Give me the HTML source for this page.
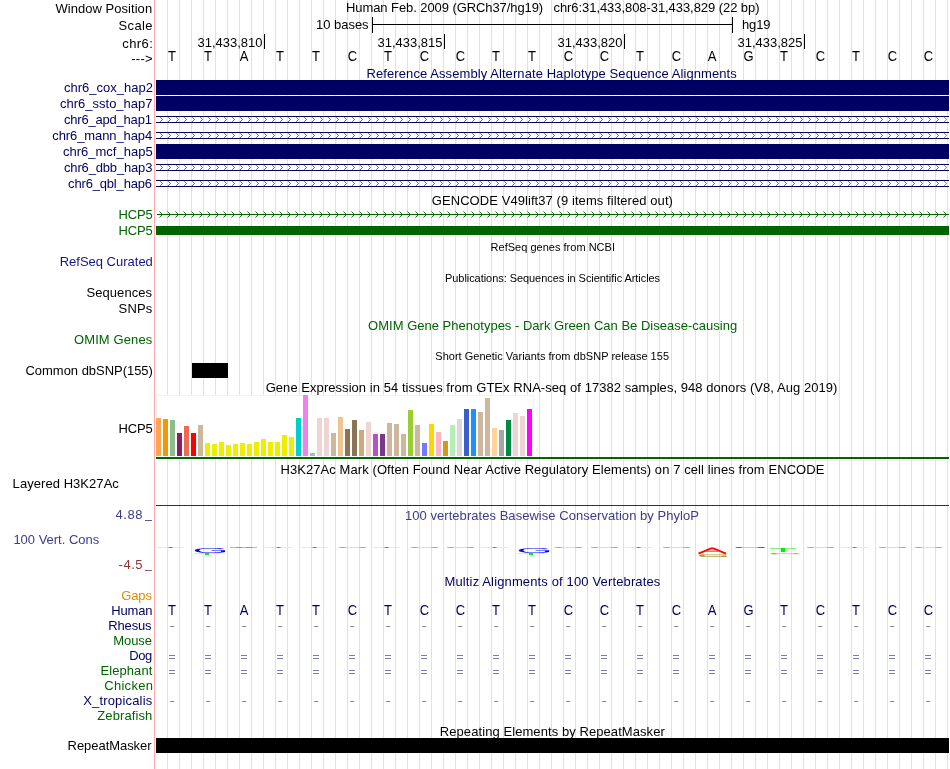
<!DOCTYPE html>
<html><head><meta charset="utf-8"><style>
html,body{margin:0;padding:0;background:#fff;width:950px;height:769px;overflow:hidden}
svg{display:block;will-change:transform}
text{font-family:"Liberation Sans",sans-serif}
</style></head><body>
<svg width="950" height="769" viewBox="0 0 950 769">
<defs>
<pattern id="chevN" x="160" y="0" width="8" height="16" patternUnits="userSpaceOnUse">
<rect x="0" y="5" width="1" height="1" fill="#000064" opacity="0.47"/>
<rect x="1" y="6" width="1" height="1" fill="#000064" opacity="0.47"/>
<rect x="2" y="7" width="1" height="1" fill="#000064" opacity="0.47"/>
<rect x="1" y="8" width="1" height="1" fill="#000064" opacity="0.47"/>
<rect x="0" y="9" width="1" height="1" fill="#000064" opacity="0.47"/>
</pattern>
<pattern id="chevG" x="159" y="211" width="8" height="7" patternUnits="userSpaceOnUse">
<rect x="0" y="0" width="1" height="1" fill="#006400" opacity="0.45"/>
<rect x="1" y="1" width="1" height="1" fill="#006400" opacity="0.9"/>
<rect x="2" y="2" width="1" height="3" fill="#006400" opacity="0.9"/>
<rect x="1" y="5" width="1" height="1" fill="#006400" opacity="0.9"/>
<rect x="0" y="6" width="1" height="1" fill="#006400" opacity="0.45"/>
</pattern>
</defs>
<rect x="0" y="0" width="950" height="769" fill="#fff"/>
<rect x="167" y="0" width="1" height="769" fill="#DDDDFF" />
<rect x="179" y="0" width="1" height="769" fill="#DDDDFF" />
<rect x="191" y="0" width="1" height="769" fill="#DDDDFF" />
<rect x="203" y="0" width="1" height="769" fill="#DDDDFF" />
<rect x="215" y="0" width="1" height="769" fill="#DDDDFF" />
<rect x="227" y="0" width="1" height="769" fill="#DDDDFF" />
<rect x="239" y="0" width="1" height="769" fill="#DDDDFF" />
<rect x="251" y="0" width="1" height="769" fill="#DDDDFF" />
<rect x="263" y="0" width="1" height="769" fill="#DDDDFF" />
<rect x="275" y="0" width="1" height="769" fill="#DDDDFF" />
<rect x="287" y="0" width="1" height="769" fill="#DDDDFF" />
<rect x="299" y="0" width="1" height="769" fill="#DDDDFF" />
<rect x="311" y="0" width="1" height="769" fill="#DDDDFF" />
<rect x="323" y="0" width="1" height="769" fill="#DDDDFF" />
<rect x="335" y="0" width="1" height="769" fill="#DDDDFF" />
<rect x="347" y="0" width="1" height="769" fill="#DDDDFF" />
<rect x="359" y="0" width="1" height="769" fill="#DDDDFF" />
<rect x="371" y="0" width="1" height="769" fill="#DDDDFF" />
<rect x="383" y="0" width="1" height="769" fill="#DDDDFF" />
<rect x="395" y="0" width="1" height="769" fill="#DDDDFF" />
<rect x="407" y="0" width="1" height="769" fill="#DDDDFF" />
<rect x="419" y="0" width="1" height="769" fill="#DDDDFF" />
<rect x="431" y="0" width="1" height="769" fill="#DDDDFF" />
<rect x="443" y="0" width="1" height="769" fill="#DDDDFF" />
<rect x="455" y="0" width="1" height="769" fill="#DDDDFF" />
<rect x="467" y="0" width="1" height="769" fill="#DDDDFF" />
<rect x="479" y="0" width="1" height="769" fill="#DDDDFF" />
<rect x="491" y="0" width="1" height="769" fill="#DDDDFF" />
<rect x="503" y="0" width="1" height="769" fill="#DDDDFF" />
<rect x="515" y="0" width="1" height="769" fill="#DDDDFF" />
<rect x="527" y="0" width="1" height="769" fill="#DDDDFF" />
<rect x="539" y="0" width="1" height="769" fill="#DDDDFF" />
<rect x="551" y="0" width="1" height="769" fill="#DDDDFF" />
<rect x="563" y="0" width="1" height="769" fill="#DDDDFF" />
<rect x="575" y="0" width="1" height="769" fill="#DDDDFF" />
<rect x="587" y="0" width="1" height="769" fill="#DDDDFF" />
<rect x="599" y="0" width="1" height="769" fill="#DDDDFF" />
<rect x="611" y="0" width="1" height="769" fill="#DDDDFF" />
<rect x="623" y="0" width="1" height="769" fill="#DDDDFF" />
<rect x="635" y="0" width="1" height="769" fill="#DDDDFF" />
<rect x="647" y="0" width="1" height="769" fill="#DDDDFF" />
<rect x="659" y="0" width="1" height="769" fill="#DDDDFF" />
<rect x="671" y="0" width="1" height="769" fill="#DDDDFF" />
<rect x="683" y="0" width="1" height="769" fill="#DDDDFF" />
<rect x="695" y="0" width="1" height="769" fill="#DDDDFF" />
<rect x="707" y="0" width="1" height="769" fill="#DDDDFF" />
<rect x="719" y="0" width="1" height="769" fill="#DDDDFF" />
<rect x="731" y="0" width="1" height="769" fill="#DDDDFF" />
<rect x="743" y="0" width="1" height="769" fill="#DDDDFF" />
<rect x="755" y="0" width="1" height="769" fill="#DDDDFF" />
<rect x="767" y="0" width="1" height="769" fill="#DDDDFF" />
<rect x="779" y="0" width="1" height="769" fill="#DDDDFF" />
<rect x="791" y="0" width="1" height="769" fill="#DDDDFF" />
<rect x="803" y="0" width="1" height="769" fill="#DDDDFF" />
<rect x="815" y="0" width="1" height="769" fill="#DDDDFF" />
<rect x="827" y="0" width="1" height="769" fill="#DDDDFF" />
<rect x="839" y="0" width="1" height="769" fill="#DDDDFF" />
<rect x="851" y="0" width="1" height="769" fill="#DDDDFF" />
<rect x="863" y="0" width="1" height="769" fill="#DDDDFF" />
<rect x="875" y="0" width="1" height="769" fill="#DDDDFF" />
<rect x="887" y="0" width="1" height="769" fill="#DDDDFF" />
<rect x="899" y="0" width="1" height="769" fill="#DDDDFF" />
<rect x="911" y="0" width="1" height="769" fill="#DDDDFF" />
<rect x="923" y="0" width="1" height="769" fill="#DDDDFF" />
<rect x="935" y="0" width="1" height="769" fill="#DDDDFF" />
<rect x="947" y="0" width="1" height="769" fill="#DDDDFF" />
<rect x="154" y="0" width="1" height="769" fill="#FFAAAA" />
<text x="0" y="0" transform="translate(55.40,13) scale(1,1.03)" font-size="13" fill="#000" textLength="96.72" lengthAdjust="spacing" >Window Position</text>
<text x="0" y="0" transform="translate(118.60,29.5) scale(1,1.03)" font-size="13" fill="#000" textLength="33.93" lengthAdjust="spacing" >Scale</text>
<text x="0" y="0" transform="translate(122.20,47.6) scale(1,1.03)" font-size="13" fill="#000" textLength="30.71" lengthAdjust="spacing" >chr6:</text>
<text x="0" y="0" transform="translate(131.30,62.7) scale(1,1.03)" font-size="13" fill="#000" textLength="21.28" lengthAdjust="spacing" >---&gt;</text>
<text x="0" y="0" transform="translate(64.00,91.7) scale(1,1.03)" font-size="13" fill="#000064" textLength="88.94" lengthAdjust="spacing" >chr6_cox_hap2</text>
<text x="0" y="0" transform="translate(60.00,107.7) scale(1,1.03)" font-size="13" fill="#000064" textLength="92.55" lengthAdjust="spacing" >chr6_ssto_hap7</text>
<text x="0" y="0" transform="translate(64.00,123.7) scale(1,1.03)" font-size="13" fill="#000064" textLength="87.91" lengthAdjust="spacing" >chr6_apd_hap1</text>
<text x="0" y="0" transform="translate(52.30,139.7) scale(1,1.03)" font-size="13" fill="#000064" textLength="99.93" lengthAdjust="spacing" >chr6_mann_hap4</text>
<text x="0" y="0" transform="translate(63.00,155.7) scale(1,1.03)" font-size="13" fill="#000064" textLength="89.64" lengthAdjust="spacing" >chr6_mcf_hap5</text>
<text x="0" y="0" transform="translate(64.00,171.7) scale(1,1.03)" font-size="13" fill="#000064" textLength="88.41" lengthAdjust="spacing" >chr6_dbb_hap3</text>
<text x="0" y="0" transform="translate(68.10,187.7) scale(1,1.03)" font-size="13" fill="#000064" textLength="83.96" lengthAdjust="spacing" >chr6_qbl_hap6</text>
<text x="0" y="0" transform="translate(118.60,218.6) scale(1,1.03)" font-size="13" fill="#006400" textLength="34.09" lengthAdjust="spacing" >HCP5</text>
<text x="0" y="0" transform="translate(118.60,234.6) scale(1,1.03)" font-size="13" fill="#006400" textLength="34.09" lengthAdjust="spacing" >HCP5</text>
<text x="0" y="0" transform="translate(59.70,265.5) scale(1,1.03)" font-size="13" fill="#14148C" textLength="93.15" lengthAdjust="spacing" >RefSeq Curated</text>
<text x="0" y="0" transform="translate(86.40,296.6) scale(1,1.03)" font-size="13" fill="#000" textLength="65.68" lengthAdjust="spacing" >Sequences</text>
<text x="0" y="0" transform="translate(118.60,313.4) scale(1,1.03)" font-size="13" fill="#000" textLength="33.63" lengthAdjust="spacing" >SNPs</text>
<text x="0" y="0" transform="translate(74.00,343.7) scale(1,1.03)" font-size="13" fill="#006400" textLength="78.30" lengthAdjust="spacing" >OMIM Genes</text>
<text x="0" y="0" transform="translate(25.50,375.4) scale(1,1.03)" font-size="13" fill="#000" textLength="127.42" lengthAdjust="spacing" >Common dbSNP(155)</text>
<text x="0" y="0" transform="translate(118.60,432.7) scale(1,1.03)" font-size="13" fill="#000" textLength="34.09" lengthAdjust="spacing" >HCP5</text>
<text x="0" y="0" transform="translate(121.20,599.5) scale(1,1.03)" font-size="13" fill="#E08A00" textLength="30.68" lengthAdjust="spacing" >Gaps</text>
<text x="0" y="0" transform="translate(111.30,614.5) scale(1,1.03)" font-size="13" fill="#000064" textLength="41.12" lengthAdjust="spacing" >Human</text>
<text x="0" y="0" transform="translate(108.30,629.5) scale(1,1.03)" font-size="13" fill="#000064" textLength="43.29" lengthAdjust="spacing" >Rhesus</text>
<text x="0" y="0" transform="translate(113.20,644.5) scale(1,1.03)" font-size="13" fill="#006400" textLength="38.83" lengthAdjust="spacing" >Mouse</text>
<text x="0" y="0" transform="translate(129.30,659.5) scale(1,1.03)" font-size="13" fill="#000064" textLength="23.06" lengthAdjust="spacing" >Dog</text>
<text x="0" y="0" transform="translate(100.50,674.5) scale(1,1.03)" font-size="13" fill="#006400" textLength="51.84" lengthAdjust="spacing" >Elephant</text>
<text x="0" y="0" transform="translate(104.20,689.5) scale(1,1.03)" font-size="13" fill="#006400" textLength="48.78" lengthAdjust="spacing" >Chicken</text>
<text x="0" y="0" transform="translate(83.20,704.5) scale(1,1.03)" font-size="13" fill="#000064" textLength="69.02" lengthAdjust="spacing" >X_tropicalis</text>
<text x="0" y="0" transform="translate(97.30,719.5) scale(1,1.03)" font-size="13" fill="#006400" textLength="54.90" lengthAdjust="spacing" >Zebrafish</text>
<text x="0" y="0" transform="translate(67.60,750) scale(1,1.03)" font-size="13" fill="#000" textLength="83.96" lengthAdjust="spacing" >RepeatMasker</text>
<text x="0" y="0" transform="translate(12.60,487.7) scale(1,1.03)" font-size="13" fill="#000" textLength="106.25" lengthAdjust="spacing" >Layered H3K27Ac</text>
<text x="0" y="0" transform="translate(13.40,543.9) scale(1,1.03)" font-size="13" fill="#3C3C8C" textLength="85.82" lengthAdjust="spacing" >100 Vert. Cons</text>
<text x="0" y="0" transform="translate(115.50,518.6) scale(1,1.03)" font-size="13" fill="#3C3C8C" textLength="27.01" lengthAdjust="spacing" >4.88</text>
<rect x="145" y="520" width="7" height="1" fill="#5A5A9A" />
<text x="0" y="0" transform="translate(118.50,568.7) scale(1,1.03)" font-size="13" fill="#8C3232" textLength="24.11" lengthAdjust="spacing" >-4.5</text>
<rect x="145" y="570" width="7" height="1" fill="#A05A5A" />
<text x="0" y="0" transform="translate(346.00,12.3) scale(1,1.03)" font-size="13" fill="#000" textLength="197.20" lengthAdjust="spacing" >Human Feb. 2009 (GRCh37/hg19)</text>
<text x="0" y="0" transform="translate(553.50,12.3) scale(1,1.03)" font-size="13" fill="#000" textLength="206.03" lengthAdjust="spacing" >chr6:31,433,808-31,433,829 (22 bp)</text>
<text x="0" y="0" transform="translate(316.10,28.5) scale(1,1.03)" font-size="13" fill="#000" textLength="52.48" lengthAdjust="spacing" >10 bases</text>
<rect x="372" y="17" width="1" height="16" fill="#000" />
<rect x="732" y="17" width="1" height="16" fill="#000" />
<rect x="372" y="24" width="361" height="1" fill="#000" />
<text x="0" y="0" transform="translate(742.00,28.5) scale(1,1.03)" font-size="13" fill="#000" textLength="28.54" lengthAdjust="spacing" >hg19</text>
<rect x="264" y="34" width="1" height="15" fill="#000" />
<text x="0" y="0" transform="translate(197.50,46.6) scale(1,1.03)" font-size="13" fill="#000" textLength="64.99" lengthAdjust="spacing" >31,433,810</text>
<rect x="444" y="34" width="1" height="15" fill="#000" />
<text x="0" y="0" transform="translate(377.50,46.6) scale(1,1.03)" font-size="13" fill="#000" textLength="64.99" lengthAdjust="spacing" >31,433,815</text>
<rect x="624" y="34" width="1" height="15" fill="#000" />
<text x="0" y="0" transform="translate(557.50,46.6) scale(1,1.03)" font-size="13" fill="#000" textLength="64.99" lengthAdjust="spacing" >31,433,820</text>
<rect x="804" y="34" width="1" height="15" fill="#000" />
<text x="0" y="0" transform="translate(737.50,46.6) scale(1,1.03)" font-size="13" fill="#000" textLength="64.99" lengthAdjust="spacing" >31,433,825</text>
<text x="0" y="0" transform="translate(172,61) scale(1,1.1)" font-size="13" fill="#000" text-anchor="middle" >T</text>
<text x="0" y="0" transform="translate(208,61) scale(1,1.1)" font-size="13" fill="#000" text-anchor="middle" >T</text>
<text x="0" y="0" transform="translate(244,61) scale(1,1.1)" font-size="13" fill="#000" text-anchor="middle" >A</text>
<text x="0" y="0" transform="translate(280,61) scale(1,1.1)" font-size="13" fill="#000" text-anchor="middle" >T</text>
<text x="0" y="0" transform="translate(316,61) scale(1,1.1)" font-size="13" fill="#000" text-anchor="middle" >T</text>
<text x="0" y="0" transform="translate(352.5,61) scale(1,1.1)" font-size="13" fill="#000" text-anchor="middle" >C</text>
<text x="0" y="0" transform="translate(388,61) scale(1,1.1)" font-size="13" fill="#000" text-anchor="middle" >T</text>
<text x="0" y="0" transform="translate(424.5,61) scale(1,1.1)" font-size="13" fill="#000" text-anchor="middle" >C</text>
<text x="0" y="0" transform="translate(460.5,61) scale(1,1.1)" font-size="13" fill="#000" text-anchor="middle" >C</text>
<text x="0" y="0" transform="translate(496,61) scale(1,1.1)" font-size="13" fill="#000" text-anchor="middle" >T</text>
<text x="0" y="0" transform="translate(532,61) scale(1,1.1)" font-size="13" fill="#000" text-anchor="middle" >T</text>
<text x="0" y="0" transform="translate(568.5,61) scale(1,1.1)" font-size="13" fill="#000" text-anchor="middle" >C</text>
<text x="0" y="0" transform="translate(604.5,61) scale(1,1.1)" font-size="13" fill="#000" text-anchor="middle" >C</text>
<text x="0" y="0" transform="translate(640,61) scale(1,1.1)" font-size="13" fill="#000" text-anchor="middle" >T</text>
<text x="0" y="0" transform="translate(676.5,61) scale(1,1.1)" font-size="13" fill="#000" text-anchor="middle" >C</text>
<text x="0" y="0" transform="translate(712,61) scale(1,1.1)" font-size="13" fill="#000" text-anchor="middle" >A</text>
<text x="0" y="0" transform="translate(748.5,61) scale(1,1.1)" font-size="13" fill="#000" text-anchor="middle" >G</text>
<text x="0" y="0" transform="translate(784,61) scale(1,1.1)" font-size="13" fill="#000" text-anchor="middle" >T</text>
<text x="0" y="0" transform="translate(820.5,61) scale(1,1.1)" font-size="13" fill="#000" text-anchor="middle" >C</text>
<text x="0" y="0" transform="translate(856,61) scale(1,1.1)" font-size="13" fill="#000" text-anchor="middle" >T</text>
<text x="0" y="0" transform="translate(892.5,61) scale(1,1.1)" font-size="13" fill="#000" text-anchor="middle" >C</text>
<text x="0" y="0" transform="translate(928.5,61) scale(1,1.1)" font-size="13" fill="#000" text-anchor="middle" >C</text>
<text x="0" y="0" transform="translate(366.60,78.2) scale(1,1.03)" font-size="13" fill="#000064" textLength="370.17" lengthAdjust="spacing" >Reference Assembly Alternate Haplotype Sequence Alignments</text>
<rect x="156" y="80" width="793" height="15" fill="#000064" />
<rect x="156" y="96" width="793" height="15" fill="#000064" />
<rect x="156" y="116" width="793" height="1" fill="#000064" />
<rect x="156" y="122" width="793" height="1" fill="#000064" />
<rect x="156" y="117" width="793" height="5" fill="url(#chevN)" />
<rect x="156" y="132" width="793" height="1" fill="#000064" />
<rect x="156" y="138" width="793" height="1" fill="#000064" />
<rect x="156" y="133" width="793" height="5" fill="url(#chevN)" />
<rect x="156" y="144" width="793" height="15" fill="#000064" />
<rect x="156" y="164" width="793" height="1" fill="#000064" />
<rect x="156" y="170" width="793" height="1" fill="#000064" />
<rect x="156" y="165" width="793" height="5" fill="url(#chevN)" />
<rect x="156" y="180" width="793" height="1" fill="#000064" />
<rect x="156" y="186" width="793" height="1" fill="#000064" />
<rect x="156" y="181" width="793" height="5" fill="url(#chevN)" />
<text x="0" y="0" transform="translate(431.80,204.7) scale(1,1.03)" font-size="13" fill="#000" textLength="241.15" lengthAdjust="spacing" >GENCODE V49lift37 (9 items filtered out)</text>
<rect x="157" y="214" width="792" height="1" fill="#006400" />
<rect x="157" y="211" width="792" height="7" fill="url(#chevG)" />
<rect x="156" y="226" width="793" height="9" fill="#006400" />
<text x="0" y="0" transform="translate(490.60,250.8) scale(1,1.03)" font-size="11" fill="#000" textLength="124.39" lengthAdjust="spacing" >RefSeq genes from NCBI</text>
<text x="0" y="0" transform="translate(445.00,282.0) scale(1,1.03)" font-size="11" fill="#000" textLength="215.10" lengthAdjust="spacing" >Publications: Sequences in Scientific Articles</text>
<text x="0" y="0" transform="translate(368.10,329.8) scale(1,1.03)" font-size="13" fill="#006400" textLength="369.08" lengthAdjust="spacing" >OMIM Gene Phenotypes - Dark Green Can Be Disease-causing</text>
<text x="0" y="0" transform="translate(435.30,359.5) scale(1,1.03)" font-size="11" fill="#000" textLength="233.73" lengthAdjust="spacing" >Short Genetic Variants from dbSNP release 155</text>
<rect x="192" y="363" width="36" height="15" fill="#000" />
<text x="0" y="0" transform="translate(265.70,391.6) scale(1,1.03)" font-size="13" fill="#000" textLength="571.66" lengthAdjust="spacing" >Gene Expression in 54 tissues from GTEx RNA-seq of 17382 samples, 948 donors (V8, Aug 2019)</text>
<rect x="156" y="395" width="378" height="62" fill="#FFFFFF" />
<rect x="156" y="395" width="378" height="1" fill="#F2F2F2" />
<rect x="533" y="395" width="1" height="62" fill="#F2F2F2" />
<rect x="156" y="395" width="1" height="62" fill="#F2F2F2" />
<rect x="156" y="418" width="5" height="38" fill="#FFA54F" />
<rect x="163" y="419" width="5" height="37" fill="#EE9A00" />
<rect x="170" y="420" width="5" height="36" fill="#8FBC8F" />
<rect x="177" y="433" width="5" height="23" fill="#8B1C62" />
<rect x="184" y="426" width="5" height="30" fill="#EE6A50" />
<rect x="191" y="433" width="5" height="23" fill="#FF0000" />
<rect x="198" y="425" width="5" height="31" fill="#CDB79E" />
<rect x="205" y="443" width="5" height="13" fill="#EEEE00" />
<rect x="212" y="444" width="5" height="12" fill="#EEEE00" />
<rect x="219" y="442" width="5" height="14" fill="#EEEE00" />
<rect x="226" y="445" width="5" height="11" fill="#EEEE00" />
<rect x="233" y="444" width="5" height="12" fill="#EEEE00" />
<rect x="240" y="443" width="5" height="13" fill="#EEEE00" />
<rect x="247" y="444" width="5" height="12" fill="#EEEE00" />
<rect x="254" y="442" width="5" height="14" fill="#EEEE00" />
<rect x="261" y="439" width="5" height="17" fill="#EEEE00" />
<rect x="268" y="442" width="5" height="14" fill="#EEEE00" />
<rect x="275" y="442" width="5" height="14" fill="#EEEE00" />
<rect x="282" y="435" width="5" height="21" fill="#EEEE00" />
<rect x="289" y="437" width="5" height="19" fill="#EEEE00" />
<rect x="296" y="418" width="5" height="38" fill="#00CDCD" />
<rect x="303" y="395" width="5" height="61" fill="#EE82EE" />
<rect x="310" y="453" width="5" height="3" fill="#9AC0CD" />
<rect x="317" y="418" width="5" height="38" fill="#EED5D2" />
<rect x="324" y="418" width="5" height="38" fill="#EED5D2" />
<rect x="331" y="433" width="5" height="23" fill="#CDB79E" />
<rect x="338" y="417" width="5" height="39" fill="#EEC591" />
<rect x="345" y="429" width="5" height="27" fill="#8B7355" />
<rect x="352" y="420" width="5" height="36" fill="#8B7355" />
<rect x="359" y="430" width="5" height="26" fill="#CDAA7D" />
<rect x="366" y="422" width="5" height="34" fill="#EED5D2" />
<rect x="373" y="434" width="5" height="22" fill="#B452CD" />
<rect x="380" y="434" width="5" height="22" fill="#7A378B" />
<rect x="387" y="423" width="5" height="33" fill="#CDB79E" />
<rect x="394" y="424" width="5" height="32" fill="#CDB79E" />
<rect x="401" y="434" width="5" height="22" fill="#CDB79E" />
<rect x="408" y="410" width="5" height="46" fill="#9ACD32" />
<rect x="415" y="425" width="5" height="31" fill="#CDB79E" />
<rect x="422" y="443" width="5" height="13" fill="#7777FF" />
<rect x="429" y="424" width="5" height="32" fill="#FFD700" />
<rect x="436" y="432" width="5" height="24" fill="#FFB6C1" />
<rect x="443" y="441" width="5" height="15" fill="#CD9B1D" />
<rect x="450" y="425" width="5" height="31" fill="#B4EEB4" />
<rect x="457" y="419" width="5" height="37" fill="#D9D9D9" />
<rect x="464" y="409" width="5" height="47" fill="#3A5FCD" />
<rect x="471" y="409" width="5" height="47" fill="#1E90FF" />
<rect x="478" y="412" width="5" height="44" fill="#CDB79E" />
<rect x="485" y="398" width="5" height="58" fill="#CDB79E" />
<rect x="492" y="428" width="5" height="28" fill="#FFD39B" />
<rect x="499" y="430" width="5" height="26" fill="#A6A6A6" />
<rect x="506" y="420" width="5" height="36" fill="#008B45" />
<rect x="513" y="413" width="5" height="43" fill="#EED5D2" />
<rect x="520" y="416" width="5" height="40" fill="#EED5D2" />
<rect x="527" y="409" width="5" height="47" fill="#FF00FF" />
<rect x="156" y="457" width="793" height="2" fill="#006400" />
<text x="0" y="0" transform="translate(280.50,473.8) scale(1,1.03)" font-size="13" fill="#000" textLength="543.94" lengthAdjust="spacing" >H3K27Ac Mark (Often Found Near Active Regulatory Elements) on 7 cell lines from ENCODE</text>
<rect x="156" y="505" width="793" height="1" fill="#6A1428" />
<text x="0" y="0" transform="translate(405.00,520) scale(1,1.03)" font-size="13" fill="#3C3C8C" textLength="293.92" lengthAdjust="spacing" >100 vertebrates Basewise Conservation by PhyloP</text>
<rect x="157.0" y="547" width="27" height="1" fill="#D2F6D2" />
<rect x="168.5" y="547" width="4" height="1" fill="#00E000" />
<text x="0" y="0" font-size="40" fill="#0000FF" transform="translate(192.6,552.7) scale(1.16,0.167)">G</text>
<rect x="194" y="553" width="26" height="1" fill="#C8F5C8" />
<rect x="205" y="553" width="4" height="2" fill="#00EE00" />
<rect x="230" y="547" width="27" height="1" fill="#F4A0A0" />
<rect x="236" y="547" width="6" height="1" fill="#F07070" />
<rect x="246" y="547" width="6" height="1" fill="#F07070" />
<rect x="265.0" y="547" width="27" height="1" fill="#D2F6D2" />
<rect x="276.5" y="547" width="4" height="1" fill="#00E000" />
<rect x="301.0" y="547" width="27" height="1" fill="#D2F6D2" />
<rect x="312.5" y="547" width="4" height="1" fill="#00E000" />
<rect x="339.0" y="547" width="27" height="1" fill="#E2DFBC" />
<ellipse cx="342.5" cy="547.5" rx="3.5" ry="0.6" fill="#B4AE50"/>
<ellipse cx="362.5" cy="547.5" rx="3.5" ry="0.6" fill="#B4AE50"/>
<rect x="373.0" y="547" width="27" height="1" fill="#D2F6D2" />
<rect x="384.5" y="547" width="4" height="1" fill="#00E000" />
<rect x="411.0" y="547" width="27" height="1" fill="#E2DFBC" />
<ellipse cx="414.5" cy="547.5" rx="3.5" ry="0.6" fill="#B4AE50"/>
<ellipse cx="434.5" cy="547.5" rx="3.5" ry="0.6" fill="#B4AE50"/>
<rect x="447.0" y="547" width="27" height="1" fill="#E2DFBC" />
<ellipse cx="450.5" cy="547.5" rx="3.5" ry="0.6" fill="#B4AE50"/>
<ellipse cx="470.5" cy="547.5" rx="3.5" ry="0.6" fill="#B4AE50"/>
<rect x="481.0" y="547" width="27" height="1" fill="#D2F6D2" />
<rect x="492.5" y="547" width="4" height="1" fill="#00E000" />
<text x="0" y="0" font-size="40" fill="#0000FF" transform="translate(516.6,552.7) scale(1.16,0.167)">G</text>
<rect x="518" y="553" width="26" height="1" fill="#C8F5C8" />
<rect x="529" y="553" width="4" height="2" fill="#00EE00" />
<rect x="555.0" y="547" width="27" height="1" fill="#E2DFBC" />
<ellipse cx="558.5" cy="547.5" rx="3.5" ry="0.6" fill="#B4AE50"/>
<ellipse cx="578.5" cy="547.5" rx="3.5" ry="0.6" fill="#B4AE50"/>
<rect x="591.0" y="547" width="27" height="1" fill="#E2DFBC" />
<ellipse cx="594.5" cy="547.5" rx="3.5" ry="0.6" fill="#B4AE50"/>
<ellipse cx="614.5" cy="547.5" rx="3.5" ry="0.6" fill="#B4AE50"/>
<rect x="625.0" y="547" width="27" height="1" fill="#D2F6D2" />
<rect x="636.5" y="547" width="4" height="1" fill="#00E000" />
<rect x="663.0" y="547" width="27" height="1" fill="#E2DFBC" />
<ellipse cx="666.5" cy="547.5" rx="3.5" ry="0.6" fill="#B4AE50"/>
<ellipse cx="686.5" cy="547.5" rx="3.5" ry="0.6" fill="#B4AE50"/>
<path d="M698.5,553.6 L711,548.3 L713.5,548.3 L726,553.6" stroke="#FF0000" stroke-width="1.8" fill="none"/>
<rect x="705.5" y="550.6" width="13" height="1.1" fill="#FF3030" />
<path d="M726.5,554.8 L703,554.8 L699.5,555.6 L703,556.5 L726.5,556.5" stroke="#B0AA50" stroke-width="1" fill="none" opacity="0.8"/>
<ellipse cx="702" cy="555.6" rx="2.8" ry="1" fill="#A09A28"/>
<ellipse cx="724" cy="556.3" rx="2.8" ry="0.7" fill="#A09A28"/>
<rect x="735.5" y="547" width="29.5" height="1" fill="#C4C4FF" />
<ellipse cx="739" cy="547.5" rx="3.5" ry="0.6" fill="#3838FF" opacity="0.85"/>
<ellipse cx="761" cy="547.5" rx="4" ry="0.6" fill="#3838FF" opacity="0.85"/>
<rect x="770" y="548" width="26" height="1" fill="#80F080" />
<rect x="781" y="548" width="4" height="4" fill="#00EE00" />
<rect x="771" y="553" width="28" height="1.2" fill="#DCD8A8" />
<ellipse cx="774" cy="553.6" rx="3.2" ry="0.9" fill="#B0AA48" opacity="0.85"/>
<ellipse cx="796" cy="553.6" rx="3.2" ry="0.7" fill="#B0AA48" opacity="0.7"/>
<rect x="807.0" y="547" width="27" height="1" fill="#E2DFBC" />
<ellipse cx="810.5" cy="547.5" rx="3.5" ry="0.6" fill="#B4AE50"/>
<ellipse cx="830.5" cy="547.5" rx="3.5" ry="0.6" fill="#B4AE50"/>
<rect x="841.0" y="547" width="27" height="1" fill="#D2F6D2" />
<rect x="852.5" y="547" width="4" height="1" fill="#00E000" />
<rect x="879.0" y="547" width="27" height="1" fill="#E2DFBC" />
<ellipse cx="882.5" cy="547.5" rx="3.5" ry="0.6" fill="#B4AE50"/>
<ellipse cx="902.5" cy="547.5" rx="3.5" ry="0.6" fill="#B4AE50"/>
<rect x="915.0" y="547" width="27" height="1" fill="#E2DFBC" />
<ellipse cx="918.5" cy="547.5" rx="3.5" ry="0.6" fill="#B4AE50"/>
<ellipse cx="938.5" cy="547.5" rx="3.5" ry="0.6" fill="#B4AE50"/>
<text x="0" y="0" transform="translate(444.50,585.5) scale(1,1.03)" font-size="13" fill="#000064" textLength="215.85" lengthAdjust="spacing" >Multiz Alignments of 100 Vertebrates</text>
<text x="0" y="0" transform="translate(172,614.8) scale(1,1.1)" font-size="13" fill="#000064" text-anchor="middle" >T</text>
<rect x="170.2" y="626" width="4" height="1" fill="#8080B0" />
<rect x="169" y="655" width="6" height="1" fill="#7A7AAE" />
<rect x="169" y="658" width="6" height="1" fill="#7A7AAE" />
<rect x="169" y="670" width="6" height="1" fill="#7A7AAE" />
<rect x="169" y="673" width="6" height="1" fill="#7A7AAE" />
<rect x="170.2" y="701" width="4" height="1" fill="#8080B0" />
<text x="0" y="0" transform="translate(208,614.8) scale(1,1.1)" font-size="13" fill="#000064" text-anchor="middle" >T</text>
<rect x="206.2" y="626" width="4" height="1" fill="#8080B0" />
<rect x="205" y="655" width="6" height="1" fill="#7A7AAE" />
<rect x="205" y="658" width="6" height="1" fill="#7A7AAE" />
<rect x="205" y="670" width="6" height="1" fill="#7A7AAE" />
<rect x="205" y="673" width="6" height="1" fill="#7A7AAE" />
<rect x="206.2" y="701" width="4" height="1" fill="#8080B0" />
<text x="0" y="0" transform="translate(244,614.8) scale(1,1.1)" font-size="13" fill="#000064" text-anchor="middle" >A</text>
<rect x="242.2" y="626" width="4" height="1" fill="#8080B0" />
<rect x="241" y="655" width="6" height="1" fill="#7A7AAE" />
<rect x="241" y="658" width="6" height="1" fill="#7A7AAE" />
<rect x="241" y="670" width="6" height="1" fill="#7A7AAE" />
<rect x="241" y="673" width="6" height="1" fill="#7A7AAE" />
<rect x="242.2" y="701" width="4" height="1" fill="#8080B0" />
<text x="0" y="0" transform="translate(280,614.8) scale(1,1.1)" font-size="13" fill="#000064" text-anchor="middle" >T</text>
<rect x="278.2" y="626" width="4" height="1" fill="#8080B0" />
<rect x="277" y="655" width="6" height="1" fill="#7A7AAE" />
<rect x="277" y="658" width="6" height="1" fill="#7A7AAE" />
<rect x="277" y="670" width="6" height="1" fill="#7A7AAE" />
<rect x="277" y="673" width="6" height="1" fill="#7A7AAE" />
<rect x="278.2" y="701" width="4" height="1" fill="#8080B0" />
<text x="0" y="0" transform="translate(316,614.8) scale(1,1.1)" font-size="13" fill="#000064" text-anchor="middle" >T</text>
<rect x="314.2" y="626" width="4" height="1" fill="#8080B0" />
<rect x="313" y="655" width="6" height="1" fill="#7A7AAE" />
<rect x="313" y="658" width="6" height="1" fill="#7A7AAE" />
<rect x="313" y="670" width="6" height="1" fill="#7A7AAE" />
<rect x="313" y="673" width="6" height="1" fill="#7A7AAE" />
<rect x="314.2" y="701" width="4" height="1" fill="#8080B0" />
<text x="0" y="0" transform="translate(352.5,614.8) scale(1,1.1)" font-size="13" fill="#000064" text-anchor="middle" >C</text>
<rect x="350.2" y="626" width="4" height="1" fill="#8080B0" />
<rect x="349" y="655" width="6" height="1" fill="#7A7AAE" />
<rect x="349" y="658" width="6" height="1" fill="#7A7AAE" />
<rect x="349" y="670" width="6" height="1" fill="#7A7AAE" />
<rect x="349" y="673" width="6" height="1" fill="#7A7AAE" />
<rect x="350.2" y="701" width="4" height="1" fill="#8080B0" />
<text x="0" y="0" transform="translate(388,614.8) scale(1,1.1)" font-size="13" fill="#000064" text-anchor="middle" >T</text>
<rect x="386.2" y="626" width="4" height="1" fill="#8080B0" />
<rect x="385" y="655" width="6" height="1" fill="#7A7AAE" />
<rect x="385" y="658" width="6" height="1" fill="#7A7AAE" />
<rect x="385" y="670" width="6" height="1" fill="#7A7AAE" />
<rect x="385" y="673" width="6" height="1" fill="#7A7AAE" />
<rect x="386.2" y="701" width="4" height="1" fill="#8080B0" />
<text x="0" y="0" transform="translate(424.5,614.8) scale(1,1.1)" font-size="13" fill="#000064" text-anchor="middle" >C</text>
<rect x="422.2" y="626" width="4" height="1" fill="#8080B0" />
<rect x="421" y="655" width="6" height="1" fill="#7A7AAE" />
<rect x="421" y="658" width="6" height="1" fill="#7A7AAE" />
<rect x="421" y="670" width="6" height="1" fill="#7A7AAE" />
<rect x="421" y="673" width="6" height="1" fill="#7A7AAE" />
<rect x="422.2" y="701" width="4" height="1" fill="#8080B0" />
<text x="0" y="0" transform="translate(460.5,614.8) scale(1,1.1)" font-size="13" fill="#000064" text-anchor="middle" >C</text>
<rect x="458.2" y="626" width="4" height="1" fill="#8080B0" />
<rect x="457" y="655" width="6" height="1" fill="#7A7AAE" />
<rect x="457" y="658" width="6" height="1" fill="#7A7AAE" />
<rect x="457" y="670" width="6" height="1" fill="#7A7AAE" />
<rect x="457" y="673" width="6" height="1" fill="#7A7AAE" />
<rect x="458.2" y="701" width="4" height="1" fill="#8080B0" />
<text x="0" y="0" transform="translate(496,614.8) scale(1,1.1)" font-size="13" fill="#000064" text-anchor="middle" >T</text>
<rect x="494.2" y="626" width="4" height="1" fill="#8080B0" />
<rect x="493" y="655" width="6" height="1" fill="#7A7AAE" />
<rect x="493" y="658" width="6" height="1" fill="#7A7AAE" />
<rect x="493" y="670" width="6" height="1" fill="#7A7AAE" />
<rect x="493" y="673" width="6" height="1" fill="#7A7AAE" />
<rect x="494.2" y="701" width="4" height="1" fill="#8080B0" />
<text x="0" y="0" transform="translate(532,614.8) scale(1,1.1)" font-size="13" fill="#000064" text-anchor="middle" >T</text>
<rect x="530.2" y="626" width="4" height="1" fill="#8080B0" />
<rect x="529" y="655" width="6" height="1" fill="#7A7AAE" />
<rect x="529" y="658" width="6" height="1" fill="#7A7AAE" />
<rect x="529" y="670" width="6" height="1" fill="#7A7AAE" />
<rect x="529" y="673" width="6" height="1" fill="#7A7AAE" />
<rect x="530.2" y="701" width="4" height="1" fill="#8080B0" />
<text x="0" y="0" transform="translate(568.5,614.8) scale(1,1.1)" font-size="13" fill="#000064" text-anchor="middle" >C</text>
<rect x="566.2" y="626" width="4" height="1" fill="#8080B0" />
<rect x="565" y="655" width="6" height="1" fill="#7A7AAE" />
<rect x="565" y="658" width="6" height="1" fill="#7A7AAE" />
<rect x="565" y="670" width="6" height="1" fill="#7A7AAE" />
<rect x="565" y="673" width="6" height="1" fill="#7A7AAE" />
<rect x="566.2" y="701" width="4" height="1" fill="#8080B0" />
<text x="0" y="0" transform="translate(604.5,614.8) scale(1,1.1)" font-size="13" fill="#000064" text-anchor="middle" >C</text>
<rect x="602.2" y="626" width="4" height="1" fill="#8080B0" />
<rect x="601" y="655" width="6" height="1" fill="#7A7AAE" />
<rect x="601" y="658" width="6" height="1" fill="#7A7AAE" />
<rect x="601" y="670" width="6" height="1" fill="#7A7AAE" />
<rect x="601" y="673" width="6" height="1" fill="#7A7AAE" />
<rect x="602.2" y="701" width="4" height="1" fill="#8080B0" />
<text x="0" y="0" transform="translate(640,614.8) scale(1,1.1)" font-size="13" fill="#000064" text-anchor="middle" >T</text>
<rect x="638.2" y="626" width="4" height="1" fill="#8080B0" />
<rect x="637" y="655" width="6" height="1" fill="#7A7AAE" />
<rect x="637" y="658" width="6" height="1" fill="#7A7AAE" />
<rect x="637" y="670" width="6" height="1" fill="#7A7AAE" />
<rect x="637" y="673" width="6" height="1" fill="#7A7AAE" />
<rect x="638.2" y="701" width="4" height="1" fill="#8080B0" />
<text x="0" y="0" transform="translate(676.5,614.8) scale(1,1.1)" font-size="13" fill="#000064" text-anchor="middle" >C</text>
<rect x="674.2" y="626" width="4" height="1" fill="#8080B0" />
<rect x="673" y="655" width="6" height="1" fill="#7A7AAE" />
<rect x="673" y="658" width="6" height="1" fill="#7A7AAE" />
<rect x="673" y="670" width="6" height="1" fill="#7A7AAE" />
<rect x="673" y="673" width="6" height="1" fill="#7A7AAE" />
<rect x="674.2" y="701" width="4" height="1" fill="#8080B0" />
<text x="0" y="0" transform="translate(712,614.8) scale(1,1.1)" font-size="13" fill="#000064" text-anchor="middle" >A</text>
<rect x="710.2" y="626" width="4" height="1" fill="#8080B0" />
<rect x="709" y="655" width="6" height="1" fill="#7A7AAE" />
<rect x="709" y="658" width="6" height="1" fill="#7A7AAE" />
<rect x="709" y="670" width="6" height="1" fill="#7A7AAE" />
<rect x="709" y="673" width="6" height="1" fill="#7A7AAE" />
<rect x="710.2" y="701" width="4" height="1" fill="#8080B0" />
<text x="0" y="0" transform="translate(748.5,614.8) scale(1,1.1)" font-size="13" fill="#000064" text-anchor="middle" >G</text>
<rect x="746.2" y="626" width="4" height="1" fill="#8080B0" />
<rect x="745" y="655" width="6" height="1" fill="#7A7AAE" />
<rect x="745" y="658" width="6" height="1" fill="#7A7AAE" />
<rect x="745" y="670" width="6" height="1" fill="#7A7AAE" />
<rect x="745" y="673" width="6" height="1" fill="#7A7AAE" />
<rect x="746.2" y="701" width="4" height="1" fill="#8080B0" />
<text x="0" y="0" transform="translate(784,614.8) scale(1,1.1)" font-size="13" fill="#000064" text-anchor="middle" >T</text>
<rect x="782.2" y="626" width="4" height="1" fill="#8080B0" />
<rect x="781" y="655" width="6" height="1" fill="#7A7AAE" />
<rect x="781" y="658" width="6" height="1" fill="#7A7AAE" />
<rect x="781" y="670" width="6" height="1" fill="#7A7AAE" />
<rect x="781" y="673" width="6" height="1" fill="#7A7AAE" />
<rect x="782.2" y="701" width="4" height="1" fill="#8080B0" />
<text x="0" y="0" transform="translate(820.5,614.8) scale(1,1.1)" font-size="13" fill="#000064" text-anchor="middle" >C</text>
<rect x="818.2" y="626" width="4" height="1" fill="#8080B0" />
<rect x="817" y="655" width="6" height="1" fill="#7A7AAE" />
<rect x="817" y="658" width="6" height="1" fill="#7A7AAE" />
<rect x="817" y="670" width="6" height="1" fill="#7A7AAE" />
<rect x="817" y="673" width="6" height="1" fill="#7A7AAE" />
<rect x="818.2" y="701" width="4" height="1" fill="#8080B0" />
<text x="0" y="0" transform="translate(856,614.8) scale(1,1.1)" font-size="13" fill="#000064" text-anchor="middle" >T</text>
<rect x="854.2" y="626" width="4" height="1" fill="#8080B0" />
<rect x="853" y="655" width="6" height="1" fill="#7A7AAE" />
<rect x="853" y="658" width="6" height="1" fill="#7A7AAE" />
<rect x="853" y="670" width="6" height="1" fill="#7A7AAE" />
<rect x="853" y="673" width="6" height="1" fill="#7A7AAE" />
<rect x="854.2" y="701" width="4" height="1" fill="#8080B0" />
<text x="0" y="0" transform="translate(892.5,614.8) scale(1,1.1)" font-size="13" fill="#000064" text-anchor="middle" >C</text>
<rect x="890.2" y="626" width="4" height="1" fill="#8080B0" />
<rect x="889" y="655" width="6" height="1" fill="#7A7AAE" />
<rect x="889" y="658" width="6" height="1" fill="#7A7AAE" />
<rect x="889" y="670" width="6" height="1" fill="#7A7AAE" />
<rect x="889" y="673" width="6" height="1" fill="#7A7AAE" />
<rect x="890.2" y="701" width="4" height="1" fill="#8080B0" />
<text x="0" y="0" transform="translate(928.5,614.8) scale(1,1.1)" font-size="13" fill="#000064" text-anchor="middle" >C</text>
<rect x="926.2" y="626" width="4" height="1" fill="#8080B0" />
<rect x="925" y="655" width="6" height="1" fill="#7A7AAE" />
<rect x="925" y="658" width="6" height="1" fill="#7A7AAE" />
<rect x="925" y="670" width="6" height="1" fill="#7A7AAE" />
<rect x="925" y="673" width="6" height="1" fill="#7A7AAE" />
<rect x="926.2" y="701" width="4" height="1" fill="#8080B0" />
<text x="0" y="0" transform="translate(439.80,735.6) scale(1,1.03)" font-size="13" fill="#000" textLength="225.03" lengthAdjust="spacing" >Repeating Elements by RepeatMasker</text>
<rect x="156" y="738" width="793" height="15" fill="#000" />
</svg>
</body></html>
